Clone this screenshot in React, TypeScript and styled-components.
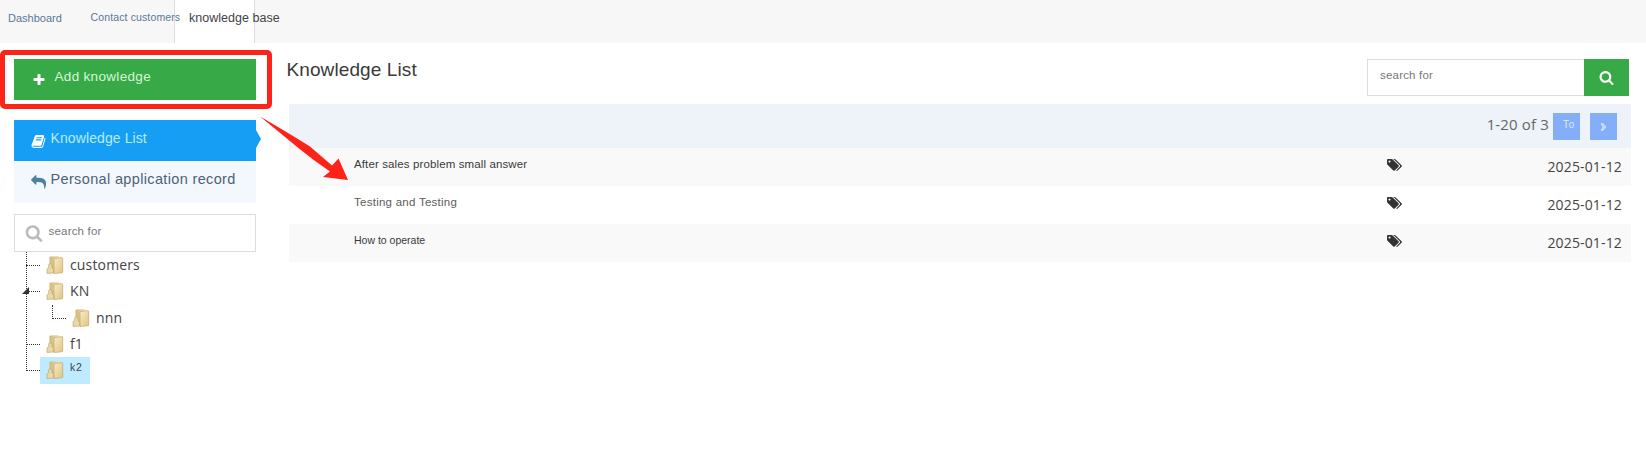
import React from "react";
import styled, { createGlobalStyle } from "styled-components";

const GlobalStyle = createGlobalStyle`
  * { box-sizing: border-box; }
  body { margin: 0; background: #fff; overflow: hidden; }
  ul { list-style: none; margin: 0; padding: 0; }
`;

const Page = styled.div`
  position: relative;
  width: 1646px;
  height: 470px;
  font-family: "Liberation Sans", Arial, sans-serif;
  color: #333;
`;

const Label = styled.span<{ $size: number; $spacing?: number; $shift?: number; $color?: string }>`
  font-size: ${(p) => p.$size}px;
  letter-spacing: ${(p) => p.$spacing ?? 0}px;
  margin-top: ${(p) => p.$shift ?? 0}px;
  color: ${(p) => p.$color ?? "inherit"};
  line-height: 20px;
  white-space: nowrap;
`;

const TabBar = styled.nav`
  display: flex;
  height: 43px;
  background: #f7f7f7;
`;

const Tab = styled.a<{ $width: number; $pad: number; $active?: boolean }>`
  display: flex;
  flex: none;
  align-items: flex-start;
  width: ${(p) => p.$width}px;
  padding: 8px 0 0 ${(p) => p.$pad}px;
  position: relative;
  z-index: ${(p) => (p.$active ? 0 : 1)};
  color: ${(p) => (p.$active ? "#444" : "#5b7896")};
  background: ${(p) => (p.$active ? "#fff" : "transparent")};
  border: solid #ddd;
  border-width: ${(p) => (p.$active ? "0 1px" : "0")};
`;

const Body = styled.div`
  display: flex;
  gap: 33px;
  padding: 16px 15px 0 14px;
`;

const Sidebar = styled.aside`
  width: 242px;
  flex: none;
`;

const AddButton = styled.div`
  display: flex;
  align-items: flex-start;
  height: 41px;
  padding: 8px 0 0 17.5px;
  gap: 9px;
  color: #d5f7d5;
  background: #37aa47;
  svg { margin-top: 6px; }
`;

const Menu = styled.ul`
  margin-top: 20px;
`;

const MenuItem = styled.li<{ $active?: boolean }>`
  position: relative;
  display: flex;
  height: ${(p) => (p.$active ? 41 : 42)}px;
  padding: 8px 0 0 17px;
  gap: 4.5px;
  color: ${(p) => (p.$active ? "#b4ecff" : "#4d6274")};
  background: ${(p) => (p.$active ? "#169ef4" : "#f2f8fd")};
  svg { margin-top: 6px; flex: none; }
`;

const Pointer = styled.i`
  position: absolute;
  left: 242px;
  top: 10px;
  border: solid transparent;
  border-width: 9px 0 9px 5.5px;
  border-left-color: #169ef4;
`;

const TreeSearch = styled.div`
  display: flex;
  gap: 5.5px;
  height: 38px;
  margin-top: 11px;
  padding: 6px 0 0 10px;
  border: 1px solid #ddd;
  color: #777;
  svg { margin-top: 3px; }
`;

const Tree = styled.div`
  position: relative;
  padding-left: 12px;
`;

const TreeLine = styled.i`
  position: absolute;
  left: 12px;
  top: 0;
  height: 119px;
  border-left: 1px dotted #333;
`;

const TreeArrow = styled.svg`
  position: absolute;
  left: 8px;
  top: 35px;
`;

const TreeRow = styled.div<{ $nested?: boolean }>`
  display: flex;
  height: 26.3px;
  margin-left: ${(p) => (p.$nested ? 26 : 0)}px;
`;

const Branch = styled.i<{ $nested?: boolean }>`
  width: 14px;
  height: 14px;
  border: dotted #333;
  border-width: ${(p) => (p.$nested ? "0 0 1px 1px" : "0 0 1px 0")};
`;

const TreeNode = styled.div<{ $selected?: boolean }>`
  display: flex;
  gap: 6px;
  height: 27px;
  padding: 3px ${(p) => (p.$selected ? 7.5 : 0)}px 0 6px;
  background: ${(p) => (p.$selected ? "#beebff" : "transparent")};
  font-family: ${(p) => (p.$selected ? "inherit" : '"Open Sans", sans-serif')};
  color: #444;
`;

const Main = styled.main`
  width: 1342px;
`;

const Heading = styled.header`
  display: flex;
  justify-content: space-between;
  height: 45px;
  padding-right: 2px;
`;

const Title = styled.h1`
  margin: 1px 0 0 -2.5px;
  font-size: 19px;
  font-weight: 400;
  line-height: 20px;
  letter-spacing: 0.1px;
  color: #3a3a3a;
`;

const SearchGroup = styled.div`
  display: flex;
  height: 37px;
`;

const SearchField = styled.div`
  width: 217px;
  padding: 5px 0 0 12px;
  border: 1px solid #ddd;
  border-right: 0;
  color: #777;
`;

const SearchButton = styled.div`
  width: 45px;
  padding: 11px 0 0 15px;
  background: #37aa47;
`;

const Toolbar = styled.div`
  display: flex;
  justify-content: flex-end;
  height: 44px;
  padding: 9px 14px 0 0;
  background: #edf3f8;
  color: #666;
`;

const Count = styled.div`
  font: 15px/22px "Open Sans", sans-serif;
  letter-spacing: 0.15px;
  margin-right: 4px;
`;

const PageButton = styled.div<{ $gap?: number }>`
  display: flex;
  justify-content: center;
  width: 27px;
  height: 27px;
  padding-left: ${(p) => (p.$gap ? 0 : 5)}px;
  margin-left: ${(p) => p.$gap ?? 0}px;
  background: #85aef8;
  color: #dbe9ff;
  svg { margin-top: 9px; }
`;

const Row = styled.div<{ $shaded?: boolean }>`
  display: grid;
  grid-template-columns: 1097px 1fr auto;
  height: 38px;
  padding: 6px 9px 0 0;
  background: ${(p) => (p.$shaded ? "#f9f9f9" : "#fff")};
  svg { margin-top: 4px; }
`;

const Question = styled.div`
  display: flex;
  padding-left: 65px;
`;

const DateText = styled.time`
  font: 14px/26px "Open Sans", sans-serif;
  letter-spacing: 0.15px;
  color: #444;
`;

const Highlight = styled.div`
  position: absolute;
  left: 0;
  top: 50px;
  width: 272px;
  height: 59px;
  border: 5px solid #fd2318;
  border-radius: 5px;
`;

const Arrow = styled.svg`
  position: absolute;
  left: 259px;
  top: 115px;
`;

const glyphs = {
  plus: "M1600 736v192q0 40-28 68t-68 28h-416v416q0 40-28 68t-68 28h-192q-40 0-68-28t-28-68v-416h-416q-40 0-68-28t-28-68v-192q0-40 28-68t68-28h416v-416q0-40 28-68t68-28h192q40 0 68 28t28 68v416h416q40 0 68 28t28 68z",
  search:
    "M1216 832q0-185-131.5-316.5t-316.5-131.5-316.5 131.5-131.5 316.5 131.5 316.5 316.5 131.5 316.5-131.5 131.5-316.5zm512 832q0 52-38 90t-90 38q-54 0-90-38l-343-342q-179 124-399 124-143 0-273.5-55.5t-225-150-150-225-55.5-273.5 55.5-273.5 150-225 225-150 273.5-55.5 273.5 55.5 225 150 150 225 55.5 273.5q0 220-124 399l343 343q37 37 37 90z",
  tags: "M576 448q0-53-37.5-90.5t-90.5-37.5-90.5 37.5-37.5 90.5 37.5 90.5 90.5 37.5 90.5-37.5 37.5-90.5zm1067 576q0 53-37 90l-491 492q-39 37-91 37-53 0-90-37l-715-716q-38-37-64.5-101t-26.5-117v-416q0-52 38-90t90-38h416q53 0 117 26.5t102 64.5l715 714q37 39 37 91zm384 0q0 53-37 90l-491 492q-39 37-91 37-36 0-59-14t-53-45l470-470q37-37 37-90 0-52-37-91l-715-714q-38-38-102-64.5t-117-26.5h224q53 0 117 26.5t102 64.5l715 714q37 39 37 91z",
  book: "M1703 478q40 57 18 129l-275 906q-19 64-76.5 107.5t-122.5 43.5h-923q-77 0-148.5-53.5t-99.5-131.5q-24-67-2-127 0-4 3-27t4-37q1-8-3-21.5t-3-19.5q2-11 8-21t16.5-23.5 16.5-23.5q23-38 45-91.5t30-91.5q3-10 .5-30t-.5-28q3-11 17-28t17-23q21-36 42-92t25-90q1-9-2.5-32t.5-28q4-13 22-30.5t22-22.5q19-26 42.5-84.5t27.5-96.5q1-8-3-25.5t-2-26.5q2-8 9-18t18-23 17-21q8-12 16.5-30.5t15-35 16-36 19.5-32 26.5-23.5 36-11.5 47.5 5.5l-1 3q38-9 51-9h761q74 0 114 56t18 130l-274 906q-36 119-71.5 153.5t-128.5 34.5h-869q-27 0-38 15-11 16-1 43 24 70 144 70h923q29 0 56-15.5t35-41.5l300-987q7-22 5-57 38 15 59 43zm-1064 2q-4 13 2 22.5t20 9.5h608q13 0 25.5-9.5t16.5-22.5l21-64q4-13-2-22.5t-20-9.5h-608q-13 0-25.5 9.5t-16.5 22.5zm-83 256q-4 13 2 22.5t20 9.5h608q13 0 25.5-9.5t16.5-22.5l21-64q4-13-2-22.5t-20-9.5h-608q-13 0-25.5 9.5t-16.5 22.5z",
  reply:
    "M1792 1120q0 166-127 451-3 7-10.5 24t-13.5 30-13 22q-12 17-28 17-15 0-23.5-10t-8.5-25q0-9 2.5-26.5t2.5-23.5q5-68 5-123 0-400-236-530-190-90-474-90h-224v256q0 26-19 45t-45 19-45-19l-512-512q-19-19-19-45t19-45l512-512q19-19 45-19t45 19 19 45v256h224q713 0 875 403 53 134 53 333z",
};

function Icon({ name, size, color, wide }: { name: keyof typeof glyphs; size: number; color: string; wide?: boolean }) {
  const w = wide ? 2048 : 1792;
  return (
    <svg width={(size * w) / 1792} height={size} viewBox={`0 0 ${w} 1792`}>
      <path d={glyphs[name]} fill={color} />
    </svg>
  );
}

function FolderIcon() {
  return (
    <svg width="18" height="20" viewBox="0 0 18 20">
      <defs>
        <linearGradient id="paper" x1="0" y1="0" x2="1" y2="1">
          <stop offset="0" stopColor="#f8ecc8" />
          <stop offset="1" stopColor="#dfc482" />
        </linearGradient>
        <linearGradient id="cover" x1="0" y1="0" x2="1" y2="0">
          <stop offset="0" stopColor="#d2b573" />
          <stop offset="1" stopColor="#f3e6bd" />
        </linearGradient>
      </defs>
      <path d="M3.5 2.2Q3.5 1.5 4.5 1.4L13 1v16L3.5 18z" fill="url(#cover)" />
      <path d="M8 4.500q0-1 1-1.100L15.800 2.600q.9 0 .9.900v13.500q0 .7-.8.8L8 18.500z" fill="url(#paper)" stroke="#bb9d58" strokeWidth=".6" />
      <path d="M1 14.500q.2-1.400 1.700-1.800V10q.3-1.400 1.600-1.400T6 10v2.700q1.500.4 1.700 1.800V18L1 18.400z" fill="#ead9a8" stroke="#b99b57" strokeWidth=".6" />
    </svg>
  );
}

const rows = [
  { text: "After sales problem small answer", size: 11.5, spacing: 0.12, color: "#3a3a3a" },
  { text: "Testing and Testing", size: 11.5, spacing: 0.26, color: "#5c5c5c" },
  { text: "How to operate", size: 10.5, spacing: 0, color: "#3a3a3a" },
];

const nodes = [
  { text: "customers" },
  { text: "KN" },
  { text: "nnn", nested: true },
  { text: "f1" },
  { text: "k2", selected: true },
];

export default function App() {
  return (
    <Page>
      <GlobalStyle />
      <TabBar>
        <Tab $width={90} $pad={8}><Label $size={11}>Dashboard</Label></Tab>
        <Tab $width={84} $pad={0.5}><Label $size={10.5} $spacing={0.13} $shift={-1}>Contact customers</Label></Tab>
        <Tab $width={81} $pad={14} $active><Label $size={12.5} $spacing={0.03}>knowledge base</Label></Tab>
      </TabBar>
      <Body>
        <Sidebar>
          <AddButton>
            <Icon name="plus" size={14} color="#fff" />
            <Label $size={13.5} $spacing={0.32}>Add knowledge</Label>
          </AddButton>
          <Menu>
            <MenuItem $active>
              <Icon name="book" size={15} color="#fff" />
              <Label $size={14} $spacing={0.1}>Knowledge List</Label>
              <Pointer />
            </MenuItem>
            <MenuItem>
              <Icon name="reply" size={15} color="#4b81a5" />
              <Label $size={14.5} $spacing={0.35}>Personal application record</Label>
            </MenuItem>
          </Menu>
          <TreeSearch>
            <Icon name="search" size={18} color="#bbb" />
            <Label $size={11.5} $spacing={0.2}>search for</Label>
          </TreeSearch>
          <Tree>
            <TreeLine />
            <TreeArrow width="8" height="8"><path d="M7 0v7H0z" fill="#333" /></TreeArrow>
            {nodes.map((n) => (
              <TreeRow key={n.text} $nested={n.nested}>
                <Branch $nested={n.nested} />
                <TreeNode $selected={n.selected}>
                  <FolderIcon />
                  <Label $size={n.selected ? 10.5 : 14} $spacing={n.selected ? 0.8 : 0.15} $shift={n.selected ? -3 : 0}>{n.text}</Label>
                </TreeNode>
              </TreeRow>
            ))}
          </Tree>
        </Sidebar>
        <Main>
          <Heading>
            <Title>Knowledge List</Title>
            <SearchGroup>
              <SearchField><Label $size={11.5} $spacing={0.2}>search for</Label></SearchField>
              <SearchButton><Icon name="search" size={15} color="#fff" /></SearchButton>
            </SearchGroup>
          </Heading>
          <Toolbar>
            <Count>1-20 of 3</Count>
            <PageButton><Label $size={10} $spacing={0.8} $shift={2}>To</Label></PageButton>
            <PageButton $gap={10}>
              <svg width="7" height="10"><path d="M1 1.5h2L6 5 3 8.5H1L3 5z" fill="#c5dcff" stroke="#c5dcff" /></svg>
            </PageButton>
          </Toolbar>
          {rows.map((r, i) => (
            <Row key={r.text} $shaded={i % 2 === 0}>
              <Question><Label $size={r.size} $spacing={r.spacing} $color={r.color}>{r.text}</Label></Question>
              <Icon name="tags" size={14} color="#333" wide />
              <DateText>2025-01-12</DateText>
            </Row>
          ))}
        </Main>
      </Body>
      <Highlight />
      <Arrow width="92" height="68" viewBox="0 0 92 68">
        <path d="M1 1.500Q28 17 51 31.500L73 50.500 79.500 43.500 89 65l-25-3 7-5.500Q54 45 40 33.500 20 17 1 1.500z" fill="#fd2318" />
      </Arrow>
    </Page>
  );
}
